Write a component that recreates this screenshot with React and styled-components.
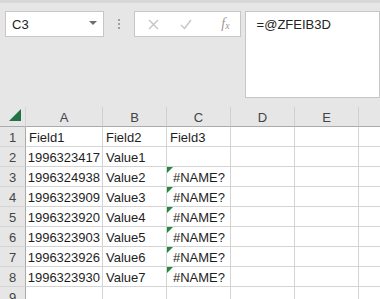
import React from "react";
import styled, { createGlobalStyle } from "styled-components";

const GlobalStyle = createGlobalStyle`
  html, body {
    margin: 0;
    padding: 0;
    background: #e6e6e6;
    overflow: hidden;
  }
  body {
    font-family: "Liberation Sans", Arial, sans-serif;
  }
`;

const columns = ["A", "B", "C", "D", "E", ""];

const rows = [
  ["Field1", "Field2", "Field3"],
  ["1996323417", "Value1", ""],
  ["1996324938", "Value2", "#NAME?"],
  ["1996323909", "Value3", "#NAME?"],
  ["1996323920", "Value4", "#NAME?"],
  ["1996323903", "Value5", "#NAME?"],
  ["1996323926", "Value6", "#NAME?"],
  ["1996323930", "Value7", "#NAME?"],
  ["", "", ""],
];

const App = () => {
  return (
    <Wrapper>
      <GlobalStyle />
      <Toolbar>
        <NameBox>
          <span>C3</span>
          <Caret />
        </NameBox>
        <Grip>
          <i />
          <i />
          <i />
        </Grip>
        <FormulaButtons>
          <svg width="11" height="11" viewBox="0 0 11 11">
            <path d="M1 1 L10 10 M10 1 L1 10" stroke="#c3c3c3" strokeWidth="1.3" fill="none" />
          </svg>
          <svg width="12" height="11" viewBox="0 0 12 11">
            <path d="M1 6 L4.5 9.5 L11 1" stroke="#c3c3c3" strokeWidth="1.3" fill="none" />
          </svg>
          <Fx>
            f<sub>x</sub>
          </Fx>
        </FormulaButtons>
        <FormulaBar>=@ZFEIB3D</FormulaBar>
      </Toolbar>
      <Sheet>
        <Corner>
          <svg width="14" height="14" viewBox="0 0 14 14">
            <path d="M13 1 L13 13 L1 13 Z" fill="#217346" />
          </svg>
        </Corner>
        {columns.map((c, i) => (
          <ColHead key={i}>{c}</ColHead>
        ))}
        {rows.map((r, ri) => (
          <React.Fragment key={ri}>
            <RowHead>{ri + 1}</RowHead>
            <Cell $align={ri > 0 ? "right" : "left"}>{r[0]}</Cell>
            <Cell>{r[1]}</Cell>
            <Cell $align={r[2] === "#NAME?" ? "center" : "left"} $flag={r[2] === "#NAME?"}>
              {r[2]}
            </Cell>
            <Cell />
            <Cell />
            <Cell />
          </React.Fragment>
        ))}
      </Sheet>
    </Wrapper>
  );
};

const Wrapper = styled.div`
  width: 380px;
  height: 299px;
  overflow: hidden;
  background: #e6e6e6;
  border-top: 3px solid #d8d8d8;
  box-sizing: border-box;
`;

const Toolbar = styled.div`
  height: 104px;
  display: flex;
  align-items: flex-start;
  padding: 8px 0 0 5px;
  box-sizing: border-box;
`;

const NameBox = styled.div`
  width: 102px;
  height: 26px;
  box-sizing: border-box;
  background: #fff;
  border: 1px solid #c6c6c6;
  display: flex;
  align-items: center;
  justify-content: space-between;
  padding: 0 6px 0 6px;
  font-size: 13px;
  color: #222;
`;

const Caret = styled.span`
  width: 0;
  height: 0;
  border-left: 4px solid transparent;
  border-right: 4px solid transparent;
  border-top: 4px solid #6d6d6d;
  margin-top: -2px;
`;

const Grip = styled.div`
  width: 31px;
  height: 26px;
  display: flex;
  flex-direction: column;
  align-items: center;
  justify-content: center;
  gap: 2px;
  i {
    width: 2px;
    height: 2px;
    background: #a0a0a0;
  }
`;

const FormulaButtons = styled.div`
  width: 110px;
  height: 26px;
  box-sizing: border-box;
  background: #fff;
  border: 1px solid #c6c6c6;
  display: flex;
  align-items: center;
  padding: 0 10px 0 13px;
  gap: 21px;
  svg:nth-child(2) {
    margin-left: 0;
  }
`;

const Fx = styled.span`
  font-family: "Liberation Serif", "Times New Roman", serif;
  font-style: italic;
  font-size: 14px;
  color: #9a9a9a;
  margin-left: auto;
  sub {
    font-size: 10px;
    vertical-align: -1px;
  }
`;

const FormulaBar = styled.div`
  margin-left: 4px;
  width: 140px;
  height: 87px;
  box-sizing: border-box;
  background: #fff;
  border: 1px solid #c6c6c6;
  padding: 5px 0 0 11px;
  font-size: 13px;
  color: #222;
`;

const Sheet = styled.div`
  display: grid;
  grid-template-columns: 26px 77px 64px 64px 64px 64px 64px;
  grid-auto-rows: 20px;
  font-size: 13px;
`;

const Corner = styled.div`
  box-sizing: border-box;
  border-right: 1px solid #d4d4d4;
  border-bottom: 1px solid #ababab;
  display: flex;
  align-items: flex-end;
  justify-content: flex-end;
  padding: 0 3px 4px 0;
`;

const ColHead = styled.div`
  box-sizing: border-box;
  border-right: 1px solid #d0d0d0;
  border-bottom: 1px solid #ababab;
  display: flex;
  align-items: center;
  justify-content: center;
  color: #444;
  padding-top: 1px;
`;

const RowHead = styled.div`
  box-sizing: border-box;
  background: #e6e6e6;
  border-right: 1px solid #ababab;
  border-bottom: 1px solid #d4d4d4;
  display: flex;
  align-items: center;
  justify-content: center;
  color: #444;
  padding-top: 1px;
`;

const Cell = styled.div`
  position: relative;
  box-sizing: border-box;
  background: #fff;
  border-right: 1px solid #d4d4d4;
  border-bottom: 1px solid #d4d4d4;
  display: flex;
  align-items: center;
  padding: 1px 2px 0 3px;
  color: #1e1e1e;
  white-space: nowrap;
  overflow: hidden;
  justify-content: ${(p) =>
    p.$align === "right" ? "flex-end" : p.$align === "center" ? "center" : "flex-start"};
  &::before {
    content: "";
    display: ${(p) => (p.$flag ? "block" : "none")};
    position: absolute;
    left: 0;
    top: 0;
    border-top: 6px solid #1e8a3c;
    border-right: 6px solid transparent;
  }
`;

export default App;
